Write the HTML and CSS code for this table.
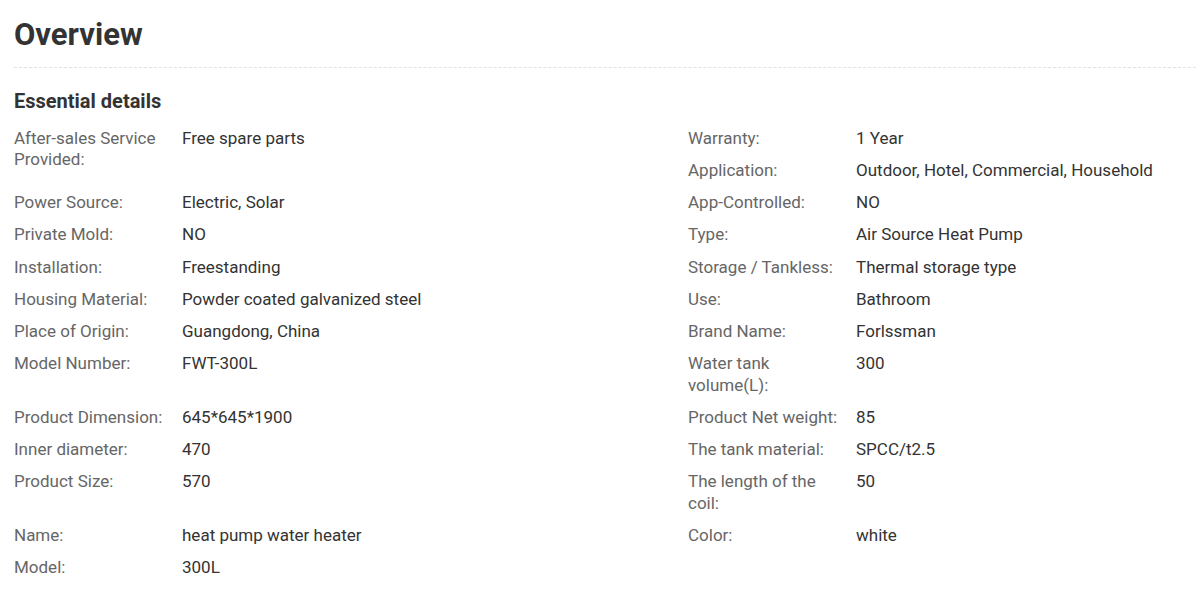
FILE: index.html
```html
<!DOCTYPE html>
<html>
<head>
<meta charset="utf-8">
<link rel="stylesheet" href="styles.css">
</head>
<body>
<div class="page">
  <h1 class="title">Overview</h1>
  <div class="divider"></div>
  <h2 class="subtitle">Essential details</h2>
  <div class="grid">
    <div class="item span2"><div class="label">After-sales Service Provided:</div><div class="value">Free spare parts</div></div>
    <div class="item"><div class="label">Warranty:</div><div class="value">1 Year</div></div>
    <div class="item"><div class="label">Application:</div><div class="value">Outdoor, Hotel, Commercial, Household</div></div>
    <div class="item"><div class="label">Power Source:</div><div class="value">Electric, Solar</div></div>
    <div class="item"><div class="label">App-Controlled:</div><div class="value">NO</div></div>
    <div class="item"><div class="label">Private Mold:</div><div class="value">NO</div></div>
    <div class="item"><div class="label">Type:</div><div class="value">Air Source Heat Pump</div></div>
    <div class="item"><div class="label">Installation:</div><div class="value">Freestanding</div></div>
    <div class="item"><div class="label">Storage / Tankless:</div><div class="value">Thermal storage type</div></div>
    <div class="item"><div class="label">Housing Material:</div><div class="value">Powder coated galvanized steel</div></div>
    <div class="item"><div class="label">Use:</div><div class="value">Bathroom</div></div>
    <div class="item"><div class="label">Place of Origin:</div><div class="value">Guangdong, China</div></div>
    <div class="item"><div class="label">Brand Name:</div><div class="value">Forlssman</div></div>
    <div class="item"><div class="label">Model Number:</div><div class="value">FWT-300L</div></div>
    <div class="item"><div class="label">Water tank volume(L):</div><div class="value">300</div></div>
    <div class="item"><div class="label">Product Dimension:</div><div class="value">645*645*1900</div></div>
    <div class="item"><div class="label">Product Net weight:</div><div class="value">85</div></div>
    <div class="item"><div class="label">Inner diameter:</div><div class="value">470</div></div>
    <div class="item"><div class="label">The tank material:</div><div class="value">SPCC/t2.5</div></div>
    <div class="item"><div class="label">Product Size:</div><div class="value">570</div></div>
    <div class="item"><div class="label">The length of the coil:</div><div class="value">50</div></div>
    <div class="item"><div class="label">Name:</div><div class="value">heat pump water heater</div></div>
    <div class="item"><div class="label">Color:</div><div class="value">white</div></div>
    <div class="item"><div class="label">Model:</div><div class="value">300L</div></div>
  </div>
</div>
</body>
</html>
```

FILE: styles.css
```css
html, body {
  margin: 0;
  padding: 0;
  background: #fff;
}
body {
  font-family: Roboto, "Liberation Sans", Arial, sans-serif;
  color: #333;
}
.page {
  padding: 15px 4px 0 14px;
}
.title {
  margin: 0;
  font-size: 31px;
  font-weight: 700;
  line-height: 40px;
  color: #333;
}
.divider {
  margin-top: 12px;
  height: 0;
  border-top: 1px dashed #e2e2e2;
}
.subtitle {
  margin: 20px 0 0;
  font-size: 20px;
  font-weight: 700;
  line-height: 26px;
  color: #333;
}
.grid {
  margin-top: 8.5px;
  display: grid;
  grid-template-columns: 674px 1fr;
  grid-auto-flow: row dense;
}
.item {
  display: flex;
  font-size: 17px;
  line-height: 21.6px;
  padding: 5.3px 0;
}
.span2 {
  grid-row: span 2;
}
.label {
  flex: 0 0 160px;
  margin-right: 8px;
  color: #666;
}
.value {
  flex: 1;
  color: #333;
}
```
